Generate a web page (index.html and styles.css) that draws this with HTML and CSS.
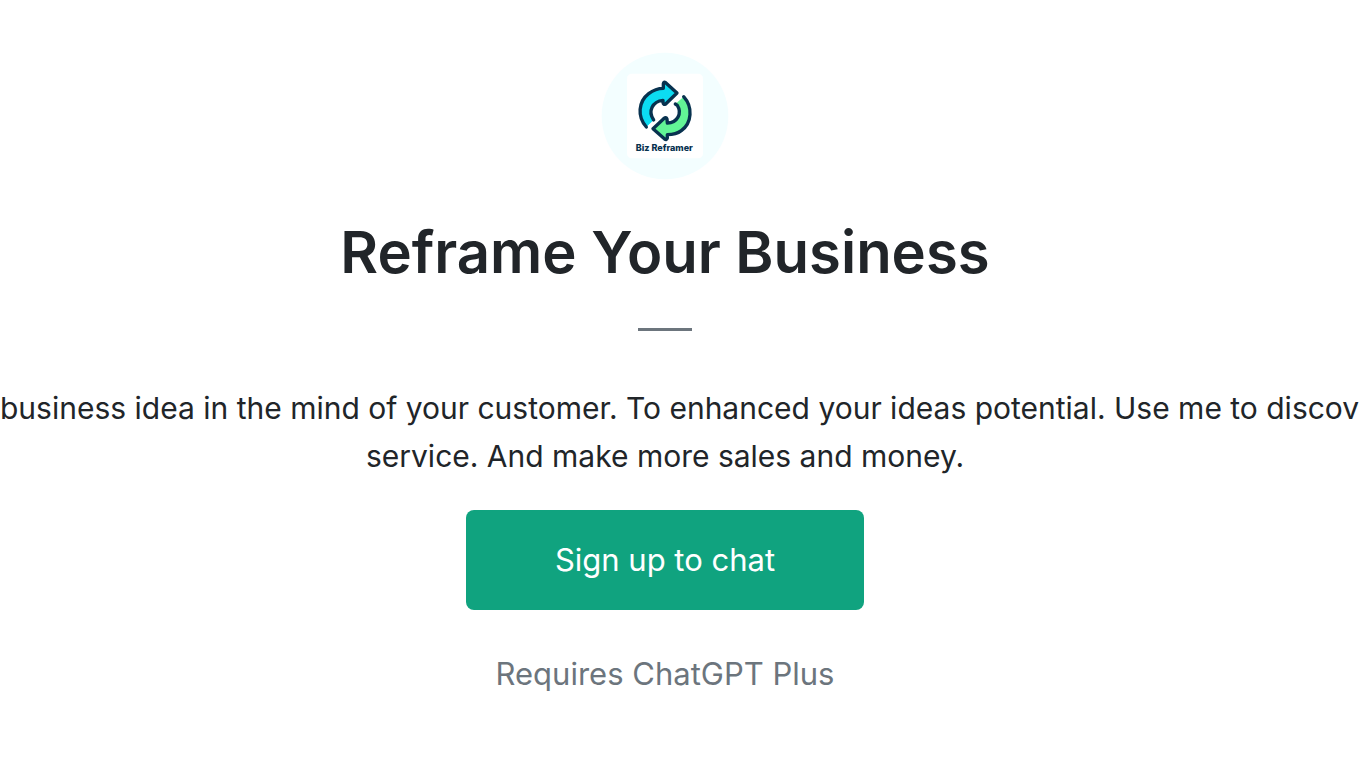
FILE: index.html
```html
<!DOCTYPE html>
<html lang="en">
<head>
    <meta charset="UTF-8">
    <meta name="viewport" content="width=device-width, initial-scale=1.0">
    <title>Reframe Your Business</title>
    <link rel="stylesheet" href="styles.css">
</head>
<body>
    <main class="container">
        <svg class="logo" viewBox="20 20 384 384" role="img" aria-label="Biz Reframer logo">
            <circle cx="212" cy="212" r="190" fill="#f3feff"/>
            <rect x="98" y="85" width="228" height="254" rx="14" fill="#ffffff"/>
            <g stroke="#08324f" stroke-width="10" stroke-linejoin="round" stroke-linecap="round">
                <path fill="#0cdcf2" d="M156 245 C128 214 132 169 163 145 C177 134 193 129 207 129 L207 115 Q208 108 214 112 L248 143 L214 176 Q207 180 206 172 L206 165 C174 168 160 198 178 224"/>
                <path fill="#62f596" d="M268 154 C296 185 293 232 261 256 C248 266 233 268 219 268 L219 278 Q217 285 211 281 L176 250 L208 220 Q216 214 218 221 L219 233 C249 233 264 204 249 180 L243 176"/>
            </g>
            <text class="logo-text" x="210" y="317" text-anchor="middle">Biz Reframer</text>
        </svg>
        <h1>Reframe Your Business</h1>
        <hr class="divider">
        <p class="description">
            <span class="line line-wide">business idea in the mind of your customer. To enhanced your ideas potential. Use me to discov</span>
            <span class="line">service. And make more sales and money.</span>
        </p>
        <button class="signup" type="button">Sign up to chat</button>
        <p class="note">Requires ChatGPT Plus</p>
    </main>
</body>
</html>
```
FILE: styles.css
```css
body {
    margin: 0;
    background-color: #ffffff;
    color: #212529;
    font-family: Inter, "Liberation Sans", sans-serif;
    font-size: 31px;
    line-height: 48px;
    text-align: center;
    overflow-x: hidden;
}

.container {
    display: flex;
    flex-direction: column;
    align-items: center;
    padding: 52px 30px 48px 0;
}

.logo {
    display: block;
    width: 128px;
    height: 128px;
}

.logo-text {
    font-family: Inter, "Liberation Sans", sans-serif;
    font-size: 27px;
    font-weight: 800;
    fill: #08324f;
}

h1 {
    margin: 34px 0 0;
    font-size: 58px;
    font-weight: 600;
    line-height: 76px;
}

.divider {
    width: 54px;
    height: 3px;
    margin: 38px 0 53px;
    border: none;
    background: #6c757d;
}

.description {
    align-self: stretch;
    margin: 0;
    font-size: 30px;
}

.line {
    display: block;
    white-space: nowrap;
}

/* runs the full width of the window */
.line-wide {
    text-align: left;
}

.signup {
    width: 398px;
    margin: 30px 0 0;
    padding: 26px 24px;
    border: none;
    border-radius: 8px;
    background: #10a37f;
    color: #ffffff;
    font: inherit;
    cursor: pointer;
}

.note {
    margin: 40px 0 0;
    color: #6c757d;
}
```
